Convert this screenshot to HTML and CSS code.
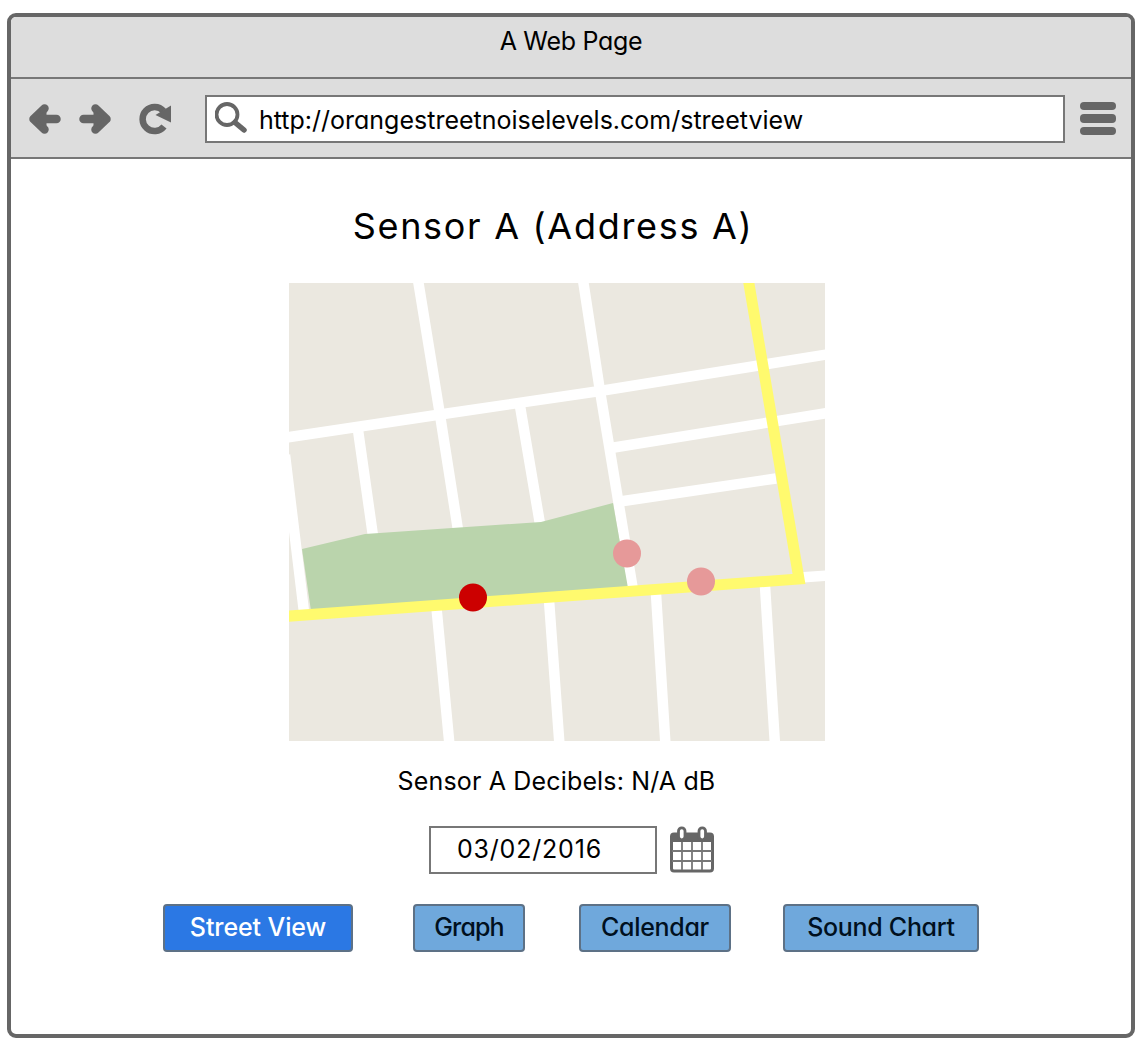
FILE: index.html
```
<!DOCTYPE html>
<html lang="en">
<head>
<meta charset="utf-8">
<title>A Web Page</title>
<link rel="stylesheet" href="styles.css">
</head>
<body>
<div class="window">
  <header class="titlebar"><span class="window-title">A Web Page</span></header>
  <nav class="toolbar">
    <svg class="nav-icons" width="150" height="40" viewBox="0 0 150 40" fill="none" stroke="#666" stroke-linecap="round" stroke-linejoin="round">
      <path d="M5.500 20H28.500M16.500 9.500L5.500 20L16.500 30.500" stroke-width="8.500"/>
      <path d="M6 20L17 10V30Z" fill="#666" stroke-width="3"/>
      <path d="M55.500 20H78.500M67.500 9.500L78.500 20L67.500 30.500" stroke-width="8.500"/>
      <path d="M78 20L67 10V30Z" fill="#666" stroke-width="3"/>
      <path d="M135.500 12A12 12 0 1 0 136 27.500" stroke-width="6.500" stroke-linecap="butt"/>
      <path d="M143 6.500V23.500L127.500 16Z" fill="#666" stroke="none"/>
    </svg>
    <div class="address">
      <svg width="34" height="34" viewBox="0 0 34 34" fill="none" stroke="#666">
        <circle cx="12" cy="12.500" r="10.500" stroke-width="3.800"/>
        <path d="M20 20.500L29 28" stroke-width="5.500" stroke-linecap="round"/>
      </svg>
      <span class="url">http://orangestreetnoiselevels.com/streetview</span>
    </div>
    <div class="menu"><i></i><i></i><i></i></div>
  </nav>
  <main class="page">
    <h1 class="heading">Sensor A (Address A)</h1>
    <svg class="map" width="536" height="458" viewBox="289 283 536 458">
      <rect x="289" y="283" width="536" height="458" fill="#ebe8e0"/>
      <g fill="none" stroke="#fff" stroke-width="10.500">
        <path d="M283 438L440 414.500L600 391L830 354"/>
        <path d="M418 280L440 415L458 530"/>
        <path d="M583 280L600 391L633 590"/>
        <path d="M358 430L373 536M520 406L540 524"/>
        <path d="M614 447.500L830 412.500M620 501.500L776 478.500"/>
        <path d="M285 455L304 612M436.500 608L449.500 745M549 600L559.500 745M656 594L665.500 745M765 586L775 745M800 577.500L830 575.500"/>
      </g>
      <path d="M289 554L297 613H289Z" fill="#ebe8e0"/>
      <path d="M302 549L365 534L541 522L613 503L628 588L311 611Z" fill="#bad4ac"/>
      <path d="M284 616.500L799 579L748 278" fill="none" stroke="#fffa6e" stroke-width="11"/>
      <circle cx="473" cy="597.500" r="14" fill="#c00"/>
      <circle cx="627" cy="553.500" r="14" fill="#e69999"/>
      <circle cx="701" cy="581.500" r="14" fill="#e69999"/>
    </svg>
    <p class="reading">Sensor A Decibels: N/A dB</p>
    <div class="date-row">
      <div class="date">03/02/2016</div>
      <svg width="44" height="48" viewBox="0 0 44 48">
        <rect x="1.500" y="8" width="41" height="37" rx="2.500" fill="#fff" stroke="#666" stroke-width="3"/>
        <path d="M1 8H43V16H1Z" fill="#666"/>
        <path d="M12 16V44M22 16V44M32 16V44M2 25H42M2 35H42" stroke="#777" stroke-width="1.800"/>
        <rect x="8.500" y="1.800" width="6.500" height="12" rx="3.200" fill="#fff" stroke="#666" stroke-width="2.800"/>
        <rect x="29" y="1.800" width="6.500" height="12" rx="3.200" fill="#fff" stroke="#666" stroke-width="2.800"/>
      </svg>
    </div>
    <div class="views">
      <button class="view street active">Street View</button>
      <button class="view graph">Graph</button>
      <button class="view calendar">Calendar</button>
      <button class="view chart">Sound Chart</button>
    </div>
  </main>
</div>
</body>
</html>
```
FILE: styles.css
```
* { box-sizing: border-box; }
body { margin: 0; padding: 13px 9px 8px 7px; height: 1046px; background: #fff; color: #000; font: 25px/32px Inter, "Open Sans", sans-serif; font-feature-settings: "cv11"; white-space: nowrap; }
.window { height: 1025px; border: 4px solid #666; border-radius: 9px; overflow: hidden; }
.titlebar { height: 62px; padding-top: 8px; border-bottom: 2px solid #777; background: #ddd; text-align: center; }
.window-title { letter-spacing: -.3px; }
.toolbar { display: flex; align-items: center; height: 80px; padding: 1px 15px 0 17px; border-bottom: 2px solid #777; background: #ddd; }
.nav-icons { flex: none; margin-right: 27px; }
.address { display: flex; align-items: center; width: 860px; height: 48px; padding-left: 8px; border: 2px solid #777; background: #fff; }
.url { margin-left: 10px; padding-top: 2px; letter-spacing: 0; }
.menu { display: flex; flex-direction: column; gap: 4px; width: 36px; margin-left: 15px; }
.menu i { height: 8.500px; border-radius: 4px; background: #666; }
.page { display: flex; flex-direction: column; padding-top: 43px; }
.heading { width: 1084px; margin: 0; font-size: 36px; line-height: 48px; font-weight: 400; letter-spacing: 1.7px; text-align: center; }
.map { display: block; margin: 33px 0 0 278px; }
.reading { width: 1091px; margin: 24px 0 0; letter-spacing: .16px; text-align: center; }
.date-row { display: flex; gap: 13px; margin: 29px 0 0 418px; }
.date { width: 228px; height: 48px; padding: 5px 0 0 26px; border: 2px solid #777; letter-spacing: .8px; }
.views { display: flex; margin: 30px 0 0 152px; }
.view { height: 48px; padding: 0 0 3px; border: 2px solid #5d7186; border-radius: 4px; background: #6fa8dc; color: #001020; font: inherit; font-weight: 500; font-feature-settings: inherit; letter-spacing: -.3px; text-align: center; }
.street { width: 190px; margin-right: 60px; }
.graph { width: 112px; margin-right: 54px; letter-spacing: -.9px; }
.calendar { width: 152px; margin-right: 52px; }
.chart { width: 196px; }
.active { background: #2b78e4; color: #fff; letter-spacing: -.1px; }
```
